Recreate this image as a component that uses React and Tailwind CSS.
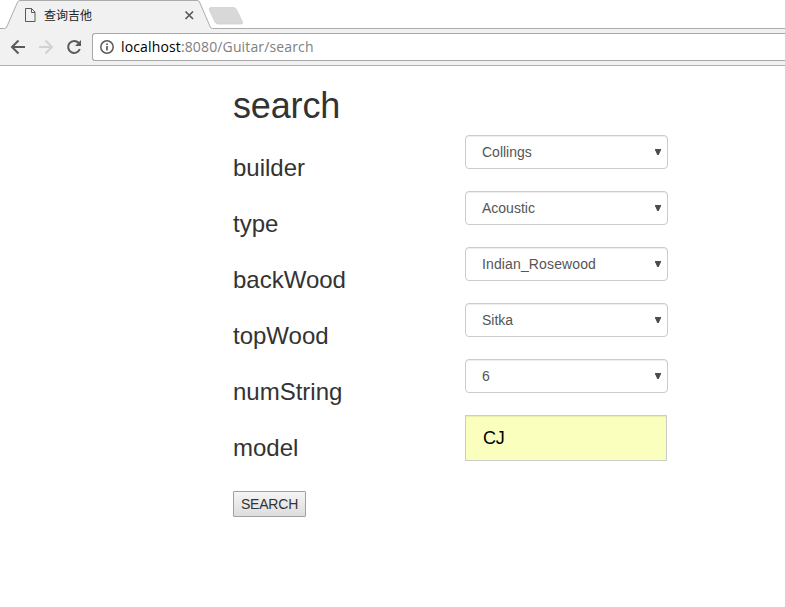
import React from "react";

const fields = [
  { label: "builder", value: "Collings" },
  { label: "type", value: "Acoustic" },
  { label: "backWood", value: "Indian_Rosewood" },
  { label: "topWood", value: "Sitka" },
  { label: "numString", value: "6" },
];

function TabStrip() {
  return (
    <div className="relative flex h-[29px] items-center bg-white">
      <svg className="absolute left-0 top-0" width="785" height="29" viewBox="0 0 785 29">
        <path d="M0 28.5H4.5Q6 28.5 6.7 27L17.6 2Q18.4 .5 20 .5H197Q198.800 .5 199.500 2L210.300 27Q211 28.500 212.500 28.500H785V30H0Z" fill="#f1f1f1" stroke="#acacac" />
        <path d="M211 7.500H233Q235.500 7.500 236.500 9.500L242.500 22Q243.500 24 241 24H218Q216 24 215 22L209.300 10Q208.500 7.500 211 7.500Z" fill="#d8d8d8" stroke="#d0d0d0" strokeWidth=".8" />
      </svg>
      <div className="relative flex w-[195px] items-center pl-[25px]">
        <svg width="11" height="14" viewBox="0 0 11 14" fill="none" stroke="#5a5a5a">
          <path d="M.5 .5H6.500L10 4V13.500H.5Z M6.500 .5V4.500H10" />
        </svg>
        <span className="ml-2 whitespace-nowrap font-['Noto_Sans_CJK_SC',sans-serif] text-xs leading-none text-[#222]">查询吉他</span>
        <svg className="ml-auto mt-px" width="11" height="11" viewBox="0 0 11 11" stroke="#5a5a5a" strokeWidth="1.7">
          <path d="M1.500 1.500L9 9M9 1.500L1.500 9" />
        </svg>
      </div>
    </div>
  );
}

function Toolbar() {
  return (
    <div className="flex h-[37px] border-b border-[#b0b0b0] bg-[#f1f1f1] pl-[10px] pt-1">
      <svg className="mt-[6px] shrink-0" width="16" height="16" viewBox="0 0 16 16" fill="none" stroke="#5a5a5a" strokeWidth="2">
        <path d="M15 8H2.500M8.500 1.500L2 8L8.500 14.500" />
      </svg>
      <svg className="ml-3 mt-[6px] shrink-0" width="16" height="16" viewBox="0 0 16 16" fill="none" stroke="#d2d2d2" strokeWidth="2">
        <path d="M1 8H13.500M7.500 1.500L14 8L7.500 14.500" />
      </svg>
      <svg className="ml-3 mt-[6px] shrink-0" width="16" height="16" viewBox="0 0 16 16">
        <path d="M12.700 4A6 6 0 1 0 13.800 10" fill="none" stroke="#5a5a5a" strokeWidth="2" />
        <path d="M15 1V7H9Z" fill="#5a5a5a" />
      </svg>
      <div className="ml-[10px] flex h-7 flex-1 items-center rounded-l-[3px] border border-r-0 border-[#a8a8a8] bg-white pl-[7px]">
        <svg width="14" height="14" viewBox="0 0 14 14" fill="none" stroke="#5a5a5a" strokeWidth="1.500">
          <circle cx="7" cy="7" r="6.200" />
          <path d="M7 6V10.500M7 3.500V5" strokeWidth="1.700" />
        </svg>
        <span className="ml-[7px] whitespace-nowrap font-['Open_Sans',sans-serif] text-sm leading-none tracking-[0.14px] text-[#808080]">
          <span className="text-black">localhost</span>:8080/Guitar/search
        </span>
      </div>
    </div>
  );
}

function SelectBox({ value }) {
  return (
    <div className="relative h-[34px] w-[203px]">
      <select
        defaultValue={value}
        className={`h-full w-full appearance-none rounded-[4px] border border-[#ccc] bg-white pl-4 text-sm text-[#555] shadow-[inset_0_1px_1px_rgba(0,0,0,0.075)] ${value === "Indian_Rosewood" ? "tracking-[0.13px]" : ""}`}
      >
        <option>{value}</option>
      </select>
      <svg className="pointer-events-none absolute right-[7px] top-[14px]" width="6" height="6" viewBox="0 0 6 6">
        <path d="M0 0H6V1L3.700 6H2.300L0 1Z" fill="#4c4c4c" />
      </svg>
    </div>
  );
}

function Row({ label, children }) {
  return (
    <div className="flex h-14">
      <h3 className="w-[232px] pt-5 text-2xl leading-[26px] text-[#333]">{label}</h3>
      {children}
    </div>
  );
}

export default function App() {
  return (
    <div className="h-[607px] overflow-hidden bg-white">
      <TabStrip />
      <Toolbar />
      <form className="pl-[233px] pt-5 font-['Liberation_Sans',Arial,sans-serif]" onSubmit={(e) => e.preventDefault()}>
        <h1 className="mb-[9px] text-4xl leading-10 tracking-[-0.15px] text-[#333]">search</h1>
        {fields.map((f) => (
          <Row key={f.label} label={f.label}>
            <SelectBox value={f.value} />
          </Row>
        ))}
        <Row label="model">
          <input
            defaultValue="CJ"
            className="h-[46px] w-[202px] border border-[#ccc] bg-[#faffbd] px-[17px] text-lg tracking-[-0.3px] text-black shadow-[inset_0_1px_1px_rgba(0,0,0,0.075)]"
          />
        </Row>
        <button className="mt-5 flex h-[26px] w-[73px] items-center justify-center rounded-[1px] border border-[#a0a0a0] bg-linear-to-b from-[#f5f5f5] to-[#dddddd] text-sm tracking-[-0.2px] text-[#333]">
          SEARCH
        </button>
      </form>
    </div>
  );
}
